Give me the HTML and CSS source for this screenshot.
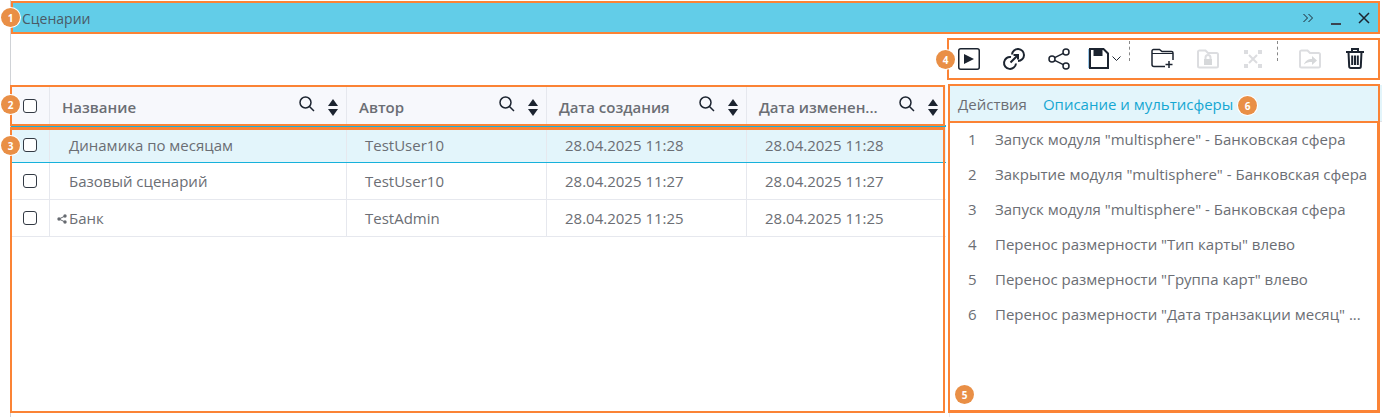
FILE: index.html
```html
<!DOCTYPE html>
<html lang="en">
<head>
    <meta charset="UTF-8">
    <meta name="viewport" content="width=device-width, initial-scale=1.0">
    <title>Сценарии</title>
    <link rel="stylesheet" href="styles.css">
</head>
<body>
    <div class="window">
        <div class="titlebar">
            <span class="title">Сценарии</span>
            <div class="window-btns">
                <svg width="14" height="14" viewBox="0 0 14 14"><path d="M2.500 3l4 4-4 4M7.500 3l4 4-4 4" class="thin"/></svg>
                <svg width="14" height="14" viewBox="0 0 14 14"><path d="M2 13h10" class="line thick"/></svg>
                <svg width="14" height="14" viewBox="0 0 14 14"><path d="M2 2l10 10M12 2L2 12" class="line"/></svg>
            </div>
        </div>

        <div class="toolbar">
            <svg class="t-play" width="22" height="22" viewBox="0 0 22 22"><rect x="0.750" y="0.750" width="20.500" height="20.500" rx="2" class="line"/><path d="M6 6l10 5-10 5z" fill="#1c2430"/></svg>
            <svg class="t-link" width="24" height="24" viewBox="0 0 24 24"><path d="M9 10a6 6 0 1 0 5 6.500" class="line wide"/><path d="M10 7.500a6 6 0 1 1 6 6.500" class="line wide"/><path d="M8.500 15.500L16 8M11.500 8H16v4.500" class="line wide"/></svg>
            <svg class="t-share" width="22" height="22" viewBox="0 0 22 22"><circle cx="4" cy="11" r="3" class="line"/><circle cx="18" cy="4" r="3" class="line"/><circle cx="18" cy="18" r="3" class="line"/><path d="M6.700 9.700l8.600-4.400M6.700 12.300l8.600 4.400" class="line"/></svg>
            <div class="save">
                <svg width="21" height="21" viewBox="0 0 21 21"><path d="M.500 1v19" stroke="#9cc9ea" stroke-width="1"/><path d="M2 1h13.500L20 5.500V20H2z" class="line wide"/><path d="M5.500 1h9v7h-9z" fill="#1c2430"/></svg>
                <svg width="9" height="5" viewBox="0 0 9 5"><path d="M.500.500l4 4 4-4" class="thin"/></svg>
            </div>
            <span class="dash d1"></span>
            <svg class="t-folder" width="23" height="21" viewBox="0 0 23 21"><path d="M14 18.500H3a2 2 0 0 1-2-2V3a1.500 1.500 0 0 1 1.500-1.500h6L11 3.500h9.500A1.500 1.500 0 0 1 22 5v7" class="line"/><path d="M1 5.500h21" class="thin"/><path d="M18 13v7M14.500 16.500h7" class="line"/></svg>
            <svg class="t-lock" width="22" height="20" viewBox="0 0 22 20"><path d="M3 1.500h5.500L11 4h8.500a1.500 1.500 0 0 1 1.500 1.500V17a1.500 1.500 0 0 1-1.500 1.500h-17A1.500 1.500 0 0 1 1 17V3a1.500 1.500 0 0 1 2-1.500z" class="line-off"/><path d="M7 10h8v6H7z" fill="#d6d8da"/><path d="M8.500 10V8.500a2.500 2.500 0 0 1 5 0V10" class="line-off"/></svg>
            <svg class="t-expand" width="18" height="18" viewBox="0 0 18 18"><path d="M0 0h4v4H0zM14 0h4v4h-4zM0 14h4v4H0zM14 14h4v4h-4z" fill="#dcdde0"/><path d="M5 5l8 8M13 5l-8 8" class="line-off"/></svg>
            <span class="dash d2"></span>
            <svg class="t-move" width="22" height="20" viewBox="0 0 22 20"><path d="M3 1.500h5.500L11 4h8.500a1.500 1.500 0 0 1 1.500 1.500V17a1.500 1.500 0 0 1-1.500 1.500h-17A1.500 1.500 0 0 1 1 17V3a1.500 1.500 0 0 1 2-1.500z" class="line-off"/><path d="M5 15.500c1-3.500 4-5.500 8-5.500V7l5 4.500-5 4.500v-3c-3 0-6 .5-8 2.500z" fill="#d6d8da"/></svg>
            <svg class="t-trash" width="18" height="21" viewBox="0 0 18 21"><path d="M0 4h18M6 3.500V1h6v2.500M2.500 4l.7 14.500a1.500 1.500 0 0 0 1.500 1.500h8.600a1.500 1.500 0 0 0 1.500-1.500L15.500 4" class="line wide"/><path d="M6.200 7.500v9.500M9 7.500v9.500M11.800 7.500v9.500" class="line wide"/></svg>
        </div>

        <div class="content">
            <div class="grid">
                <div class="row head">
                    <div class="cell check"><span class="box"></span></div>
                    <div class="cell th"><span class="th-name">Название</span><svg class="lens" width="16" height="16" viewBox="0 0 16 16"><circle cx="6.500" cy="6.500" r="5.500" class="line"/><path d="M10.500 10.500l4.500 4.500" class="line"/></svg><span class="sort"><i class="up"></i><i class="down"></i></span></div>
                    <div class="cell th"><span class="th-name">Автор</span><svg class="lens" width="16" height="16" viewBox="0 0 16 16"><circle cx="6.500" cy="6.500" r="5.500" class="line"/><path d="M10.500 10.500l4.500 4.500" class="line"/></svg><span class="sort"><i class="up"></i><i class="down"></i></span></div>
                    <div class="cell th"><span class="th-name">Дата создания</span><svg class="lens" width="16" height="16" viewBox="0 0 16 16"><circle cx="6.500" cy="6.500" r="5.500" class="line"/><path d="M10.500 10.500l4.500 4.500" class="line"/></svg><span class="sort"><i class="up"></i><i class="down"></i></span></div>
                    <div class="cell th"><span class="th-name">Дата изменен...</span><svg class="lens" width="16" height="16" viewBox="0 0 16 16"><circle cx="6.500" cy="6.500" r="5.500" class="line"/><path d="M10.500 10.500l4.500 4.500" class="line"/></svg><span class="sort"><i class="up"></i><i class="down"></i></span></div>
                </div>
                <div class="row selected">
                    <div class="cell check"><span class="box"></span></div>
                    <div class="cell name">Динамика по месяцам</div>
                    <div class="cell author">TestUser10</div>
                    <div class="cell date">28.04.2025 11:28</div>
                    <div class="cell date">28.04.2025 11:28</div>
                </div>
                <div class="row">
                    <div class="cell check"><span class="box"></span></div>
                    <div class="cell name">Базовый сценарий</div>
                    <div class="cell author">TestUser10</div>
                    <div class="cell date">28.04.2025 11:27</div>
                    <div class="cell date">28.04.2025 11:27</div>
                </div>
                <div class="row">
                    <div class="cell check"><span class="box"></span></div>
                    <div class="cell name"><svg class="shared" width="10" height="10" viewBox="0 0 10 10"><circle cx="2" cy="5" r="1.700"/><circle cx="8" cy="2" r="1.700"/><circle cx="8" cy="8" r="1.700"/><path d="M2 5l6-3M2 5l6 3" stroke="#666a70"/></svg>Банк</div>
                    <div class="cell author">TestAdmin</div>
                    <div class="cell date">28.04.2025 11:25</div>
                    <div class="cell date">28.04.2025 11:25</div>
                </div>
            </div>

            <div class="side">
                <div class="tabs">
                    <span>Действия</span>
                    <span class="tab-active">Описание и мультисферы</span>
                </div>
                <ol class="actions">
                    <li><b>1</b><span>Запуск модуля "multisphere" - Банковская сфера</span></li>
                    <li><b>2</b><span>Закрытие модуля "multisphere" - Банковская сфера</span></li>
                    <li><b>3</b><span>Запуск модуля "multisphere" - Банковская сфера</span></li>
                    <li><b>4</b><span>Перенос размерности "Тип карты" влево</span></li>
                    <li><b>5</b><span>Перенос размерности "Группа карт" влево</span></li>
                    <li><b>6</b><span>Перенос размерности "Дата транзакции месяц" ...</span></li>
                </ol>
            </div>
        </div>
    </div>

    <!-- annotation frames and numbers on top of the screenshot -->
    <div class="frame f1"></div>
    <div class="frame f2"></div>
    <div class="frame f3"></div>
    <div class="frame f4"></div>
    <div class="frame f5"></div>
    <div class="frame f6"></div>
    <span class="badge b1">1</span>
    <span class="badge b2">2</span>
    <span class="badge b3">3</span>
    <span class="badge b4">4</span>
    <span class="badge b5">5</span>
    <span class="badge b6">6</span>
</body>
</html>
```

FILE: styles.css
```css
* {
    box-sizing: border-box;
}

html, body {
    height: 100%;
}

body {
    margin: 0;
    position: relative;
    overflow: hidden;
    background: #fff;
    font-family: "Open Sans", Arial, sans-serif;
    font-size: 15px;
    color: #6b6e74;
}

svg {
    display: block;
    flex: none;
}

.line, .thin, .line-off {
    fill: none;
    stroke: #1c2430;
    stroke-width: 1.5;
}

.thin {
    stroke-width: 1;
}

.line.wide {
    stroke-width: 2;
}

.line.thick {
    stroke-width: 2;
    stroke: #3a4450;
}

.line-off {
    stroke: #dcdde0;
    stroke-width: 2;
}

.window {
    margin-left: 10px;
    height: 100%;
    display: flex;
    flex-direction: column;
    border-left: 1px solid #cfd2d6;
}

.titlebar {
    margin: 2px 2px 0 0;
    height: 32px;
    padding: 0 9px 0 11px;
    background: #62cde8;
    display: flex;
    align-items: center;
    justify-content: space-between;
    color: #4a5a66;
}

.title {
    font-size: 14px;
}

.window-btns {
    display: flex;
    gap: 14px;
}

.toolbar {
    height: 51px;
    display: flex;
    align-items: center;
    padding: 0 0 2px 947px;
}

.t-play { margin-right: 22px; }
.t-link { margin-right: 22px; }
.t-share { margin-right: 18px; }
.t-folder { margin-right: 23px; }
.t-lock { margin-right: 25px; }
.t-expand { margin-right: 15px; }
.t-move { margin-right: 25px; }

.save {
    display: flex;
    align-items: center;
    gap: 3px;
    margin-right: 8px;
}

.dash {
    align-self: flex-start;
    margin-top: 7px;
    height: 20px;
    border-left: 1px dashed #888;
    flex: none;
}

.d1, .d2 {
    margin-right: 21px;
}

.content {
    flex: 1;
    display: flex;
    min-height: 0;
}

.grid {
    width: 935px;
    flex: none;
}

.row {
    display: grid;
    grid-template-columns: 39px 297px 200px 200px 199px;
    height: 37px;
    border-bottom: 1px solid #e6e8ee;
}

.row.head {
    height: 42px;
    background: #f7f8fc;
    border-bottom: 2px solid #16b1db;
}

.row.selected {
    height: 36px;
    background: #e3f5fb;
    border-bottom: 1px solid #16b1db;
}

.cell {
    display: flex;
    align-items: center;
    padding-left: 19px;
    border-right: 1px solid #e6e8ee;
    white-space: nowrap;
}

.cell:last-child {
    border-right: none;
}

.check {
    padding-left: 12px;
}

.box {
    width: 14px;
    height: 14px;
    background: #fff;
    border: 1.5px solid #333a44;
    border-radius: 3px;
}

.head .box {
    margin-top: 2px;
}

.th {
    padding-left: 12px;
    font-weight: 600;
}

.th-name {
    flex: 1;
    padding-top: 4px;
}

.lens {
    margin: -3px 13px 0 0;
}

.sort {
    display: flex;
    flex-direction: column;
    gap: 3px;
    margin: 4px 8px 0 0;
}

.sort i {
    width: 0;
    height: 0;
    border-left: 5px solid transparent;
    border-right: 5px solid transparent;
}

.sort .up {
    border-bottom: 7px solid #1c2430;
}

.sort .down {
    border-top: 7px solid #1c2430;
}

.name {
    position: relative;
}

.shared {
    position: absolute;
    left: 7px;
    top: 14px;
    fill: #666a70;
}

.author, .date {
    padding-left: 18px;
}

.side {
    margin-left: 3px;
    flex: 1;
    min-width: 0;
    border-left: 1px solid #e6e8ee;
}

.tabs {
    height: 37px;
    padding: 2px 0 0 8px;
    display: flex;
    align-items: center;
    gap: 16px;
    background: #e3f5fb;
    border-bottom: 1px solid #dfe3e8;
}

.tab-active {
    color: #16a7d2;
}

.actions {
    list-style: none;
    margin: -1px 0 0;
    padding: 0;
}

.actions li {
    height: 35px;
    display: flex;
    align-items: center;
}

.actions b {
    width: 45px;
    flex: none;
    padding-left: 18px;
    font-weight: 400;
}

.actions span {
    white-space: nowrap;
}

.frame {
    position: absolute;
    border: 2px solid #fb8335;
}

.f1 { left: 11px; top: 1px; width: 1369px; height: 33px; }
.f2 { left: 10px; top: 85px; width: 935px; height: 41px; }
.f3 { left: 10px; top: 127px; width: 935px; height: 286px; border-top-width: 3px; }
.f4 { left: 947px; top: 38px; width: 433px; height: 42px; }
.f5 { left: 948px; top: 121px; width: 432px; height: 292px; border-width: 2px 3px 3px 2px; }
.f6 { left: 948px; top: 84px; width: 432px; height: 39px; }

.badge {
    position: absolute;
    width: 19px;
    height: 19px;
    border-radius: 50%;
    background: #e98f46;
    color: #fff;
    font-size: 10px;
    font-weight: 700;
    display: flex;
    align-items: center;
    justify-content: center;
    box-shadow: 0 0 0 1px #fff;
}

.b1 { left: 1px; top: 8px; }
.b2 { left: 1px; top: 95px; }
.b3 { left: 1px; top: 136px; }
.b4 { left: 936px; top: 50px; }
.b5 { left: 955px; top: 385px; }
.b6 { left: 1238px; top: 96px; }
```
